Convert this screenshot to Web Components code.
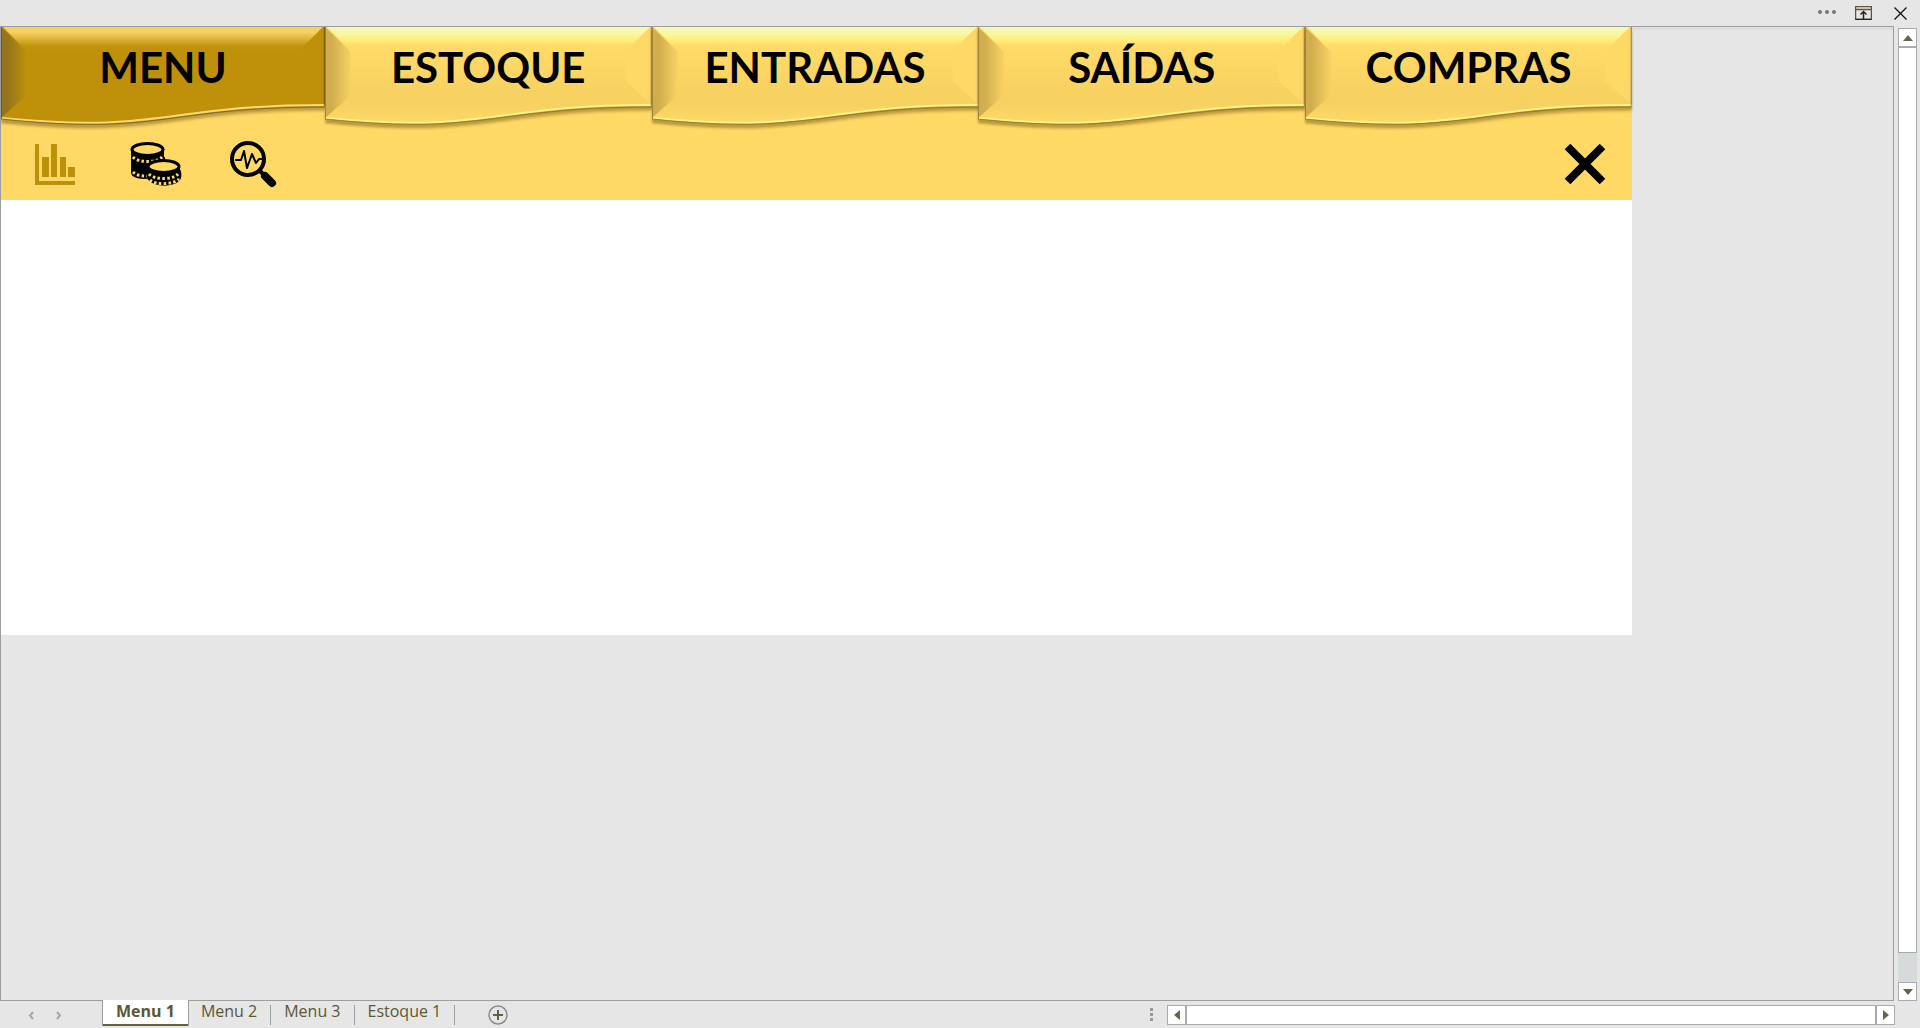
<!DOCTYPE html>
<html lang="pt-BR">
<head>
<meta charset="utf-8">
<title>Menu 1</title>
<style>
html, body { margin: 0; height: 100%; }
body { font-family: "Open Sans", "Noto Sans", sans-serif; background: #e6e6e6; }
</style>
</head>
<body>
<workbook-window>
  <window-bar slot="bar"></window-bar>
  <menu-sheet slot="sheet">
    <ribbon-tab slot="tabs" active>MENU</ribbon-tab>
    <ribbon-tab slot="tabs">ESTOQUE</ribbon-tab>
    <ribbon-tab slot="tabs">ENTRADAS</ribbon-tab>
    <ribbon-tab slot="tabs">SAÍDAS</ribbon-tab>
    <ribbon-tab slot="tabs">COMPRAS</ribbon-tab>
    <tool-strip slot="tools"></tool-strip>
  </menu-sheet>
  <scroll-bar slot="vscroll"></scroll-bar>
  <sheet-tabs slot="footer">
    <sheet-tab active>Menu 1</sheet-tab>
    <sheet-tab>Menu 2</sheet-tab>
    <sheet-tab>Menu 3</sheet-tab>
    <sheet-tab>Estoque 1</sheet-tab>
  </sheet-tabs>
  <scroll-bar slot="footer" horizontal></scroll-bar>
</workbook-window>
<script>
function define(name, html) {
  const template = document.createElement('template');
  template.innerHTML = html;
  customElements.define(name, class extends HTMLElement {
    constructor() {
      super();
      this.attachShadow({ mode: 'open' }).append(template.content.cloneNode(true));
    }
  });
}
const reset = `*{box-sizing:border-box} button{appearance:none;border:0;margin:0;padding:0;background:none;color:inherit;font:inherit;cursor:pointer} svg{display:block}`;

define('workbook-window', `
<style>${reset}
:host{display:grid;height:100vh;grid-template:26px minmax(0,1fr) 27px / minmax(0,1fr) 26px;background:#e6e6e6;overflow:hidden}
.bar{grid-column:1 / -1}
main{border:1px solid #9b9e9d;overflow:hidden;box-shadow:inset 0 4px 0 -1px #dadedd}
.side{padding:2px 3px 0 4px;display:flex}
footer{grid-column:1 / -1;display:flex;justify-content:space-between;padding-right:25px}
</style>
<div class="bar"><slot name="bar"></slot></div>
<main><slot name="sheet"></slot></main>
<div class="side"><slot name="vscroll"></slot></div>
<footer><slot name="footer"></slot></footer>`);

define('window-bar', `
<style>${reset}
:host{display:flex;justify-content:flex-end;align-items:center;height:26px;padding-right:8px;gap:14px}
button{width:23px;height:24px;display:grid;place-items:center}
</style>
<button aria-label="Mais opções"><svg width="19" height="16" fill="#77776b"><circle cx="3" cy="7" r="2"/><circle cx="10" cy="7" r="2"/><circle cx="17" cy="7" r="2"/></svg></button>
<button aria-label="Exibir faixa de opções"><svg width="17" height="14" fill="none" stroke="#222"><path stroke="#5b5738" stroke-width="1.500" d="M.5.5h16v13H.5zM1 3.500h15"/><path stroke-width="1.500" d="M.5 13.500h16M8.500 13V5.500M5.500 8.500l3-3 3 3"/></svg></button>
<button aria-label="Fechar janela"><svg width="13" height="13" stroke="#111" stroke-width="1.300"><path d="M.5.5l12 12M12.500.5l-12 12"/></svg></button>`);

define('menu-sheet', `
<style>${reset}
:host{display:block;margin-right:261px;background:#fff;min-height:608px}
header{background:#ffd966}
nav{display:grid;grid-template-columns:minmax(0,324fr) repeat(4,minmax(0,327fr));height:98px}
</style>
<header><nav><slot name="tabs"></slot></nav><slot name="tools"></slot></header>`);

define('ribbon-tab', `
<style>${reset}
:host{display:block;min-width:0;
  --face:#ffd966;--face-low:#f6d060;--top:#f8f7ae;--top-mid:#fff07a;--top-end:#ffdc69;
  --left:#d0ae4e;--left-end:#f8d364;--right:#f8ce5f;--right-end:#ffd966;--edge:#806b31;--lip:#fff480}
:host([active]){
  --face:#bf9009;--face-low:#bf9009;--top:#f6d160;--top-mid:#dcb135;--top-end:#c2940f;
  --left:#94751c;--left-end:#bf9009;--right:#bf9009;--right-end:#bf9009;--edge:#5c4d22;--lip:#ffd966}
button{display:grid;width:100%;height:98px;justify-items:center;align-items:start}
button > *{grid-area:1 / 1}
svg{width:100%;height:98px;overflow:visible;filter:drop-shadow(0 4px 1px rgba(120,90,20,.5))}
.label{position:relative;padding-top:16px;font:bold 42px/48px Lato,"Open Sans",sans-serif;color:#000}
</style>
<button>
<svg viewBox="0 0 326 98" preserveAspectRatio="none" aria-hidden="true">
  <defs>
    <linearGradient id="f" x2="0" y2="1"><stop offset=".3" style="stop-color:var(--face)"/><stop offset=".78" style="stop-color:var(--face-low)"/><stop offset="1" style="stop-color:var(--face)"/></linearGradient>
    <linearGradient id="t" x2="0" y2="1"><stop style="stop-color:var(--top)"/><stop offset=".22" style="stop-color:var(--top)"/><stop offset=".5" style="stop-color:var(--top-mid)"/><stop offset=".75" style="stop-color:var(--top-end)"/><stop offset="1" style="stop-color:var(--face)"/></linearGradient>
    <linearGradient id="l"><stop style="stop-color:var(--left)"/><stop offset=".25" style="stop-color:var(--left)"/><stop offset="1" style="stop-color:var(--left-end)"/></linearGradient>
    <linearGradient id="r"><stop style="stop-color:var(--right-end)"/><stop offset=".8" style="stop-color:var(--right-end)"/><stop offset="1" style="stop-color:var(--right)"/></linearGradient>
  </defs>
  <path fill="url(#f)" d="M0 0H326V78C163 78 163 108 0 91Z"/>
  <path fill="url(#l)" d="M0 0L26 25V68L0 91Z"/>
  <path fill="url(#r)" d="M326 0L300 25V54L326 78Z"/>
  <path fill="url(#t)" d="M2 0H324L299 25H27Z"/>
  <path fill="none" style="stroke:var(--lip)" stroke-width="2" d="M1 91C163 107 163 78 326 78"/>
  <path fill="none" style="stroke:var(--edge)" opacity=".65" d="M.5 0V92C163 109 163 80 326 80"/>
  <path fill="none" style="stroke:var(--edge)" opacity=".8" d="M325.500 0V79"/>
</svg>
<span class="label"><slot></slot></span>
</button>`);

const coin = `<path d="M0 8v10c0 10 33 10 33 0V8" fill="#000"/><ellipse cx="16.500" cy="7.500" rx="15.500" ry="6" fill="#ffd966" stroke="#000" stroke-width="3"/><path d="M2 15C7 21 26 21 31 15" fill="none" stroke="#ffd966" stroke-width="3" stroke-dasharray="2.500 2.300"/>`;
define('tool-strip', `
<style>${reset}
:host{display:flex;padding:15px 23px 12px 30px;gap:51px}
button{width:48px;height:48px}
.close{margin-left:auto}
</style>
<button aria-label="Gráficos"><svg width="48" height="48" fill="#bf9009"><path d="M4 4h4v37h36v4H4zM11 17h7v20h-7zM20 4h6v33h-6zM29 17h6v20h-6zM37 27h7v10h-7z"/></svg></button>
<button aria-label="Moedas"><svg width="52" height="48" viewBox="0 0 52 48">
  <path d="M1 20v12c0 7 12 8 20 6l12-16-5-5z"/>
  <path d="M3 32C6 35 10 36 17 36" fill="none" stroke="#ffd966" stroke-width="3" stroke-dasharray="2.500 2.300"/>
  <path d="M30 14q7 2 5 9l-6 1z"/>
  <g transform="translate(1 2)">${coin}</g>
  <path d="M19 28h30c3 3 3 10 1 12-6 8-27 7-31 0-3-3-3-9 0-12z"/>
  <path d="M20 38C25 44 44 44 49 37" fill="none" stroke="#ffd966" stroke-width="3" stroke-dasharray="2.500 2.300"/>
  <g transform="translate(17 19)">${coin}</g>
  <path d="M20 40C25 45 43 45 49 39" fill="none" stroke="#ffd966" stroke-width="3" stroke-dasharray="2.500 2.300"/>
</svg></button>
<button aria-label="Analisar"><svg width="48" height="48" fill="none" stroke="#000">
  <circle cx="19" cy="19" r="16" stroke-width="4"/>
  <path d="M7 20h5l3-9 3 17 5-14 4 9 3-4h3" stroke-width="2" stroke-linejoin="round" stroke-linecap="round"/>
  <path d="M30 30l5 5" stroke-width="4"/><path d="M36 36l7 7" stroke-width="8" stroke-linecap="round"/>
</svg></button>
<button class="close" aria-label="Fechar"><svg width="48" height="48" stroke="#000" stroke-width="8"><path d="M6.500 6.500l35 35M41.500 6.500l-35 35"/></svg></button>`);

define('scroll-bar', `
<style>${reset}
:host{display:flex;flex-direction:column;flex:1;background:#d6dadb}
button,.thumb{border:1px solid #a9acab;background:#fff}
button{width:19px;height:19px;flex:none;display:grid;place-items:center}
.thumb{flex:1}
.rest{flex:0 0 29px}
.grip{display:none}
path{fill:#66644a}
:host([horizontal]){flex-direction:row;flex:0 0 745px;height:20px;margin-top:4px;background:none}
:host([horizontal]) .rest{display:none}
:host([horizontal]) .grip{display:block;width:17px;flex:none;padding-top:2px}
:host([horizontal]) button{height:20px}
:host([horizontal]) button svg{transform:rotate(-90deg)}
</style>
<span class="grip"><svg width="3" height="15"><path d="M0 1h3v3H0zM0 6h3v3H0zM0 11h3v3H0z" style="fill:#999"/></svg></span>
<button aria-label="Voltar"><svg width="10" height="6"><path d="M0 6L5 0 10 6z"/></svg></button>
<div class="thumb"></div><div class="rest"></div>
<button aria-label="Avançar"><svg width="10" height="6"><path d="M0 0h10L5 6z"/></svg></button>`);

define('sheet-tabs', `
<style>${reset}
:host{display:flex;align-items:flex-start}
.move{display:flex;width:103px;padding:10px 0 0 28px;gap:22px}
nav{display:flex}
.add{margin:4px 0 0 33px}
</style>
<div class="move"><button aria-label="Planilha anterior"><svg width="6" height="9" fill="none" stroke="#a5a7a8" stroke-width="2"><path d="M5 1L2 4.500 5 8"/></svg></button>
<button aria-label="Próxima planilha"><svg width="6" height="9" fill="none" stroke="#a5a7a8" stroke-width="2"><path d="M1 1l3 3.500L1 8"/></svg></button></div>
<nav><slot></slot></nav>
<button class="add" aria-label="Nova planilha"><svg width="20" height="20" fill="none"><circle cx="10" cy="10" r="9" stroke="#8b8c8a" stroke-width="1.500"/><path d="M10 5v10M5 10h10" stroke="#626047" stroke-width="2"/></svg></button>`);

define('sheet-tab', `
<style>${reset}
:host{display:flex;color:#5a5736;font-size:16px;line-height:20px}
button{height:25px;padding:0 13px;display:flex;border-bottom:2px solid transparent}
i{width:1px;height:20px;margin-top:4px;background:#9b9e9d}
:host([active]) button{margin-top:-1px;height:26px;padding-top:1px;background:#fff;border-color:#65623a;font-weight:700;box-shadow:-1px 0 #9b9e9d,1px 0 #9b9e9d}
:host([active]) i{visibility:hidden;width:0}
</style>
<button><slot></slot></button><i></i>`);
</script>
</body>
</html>
